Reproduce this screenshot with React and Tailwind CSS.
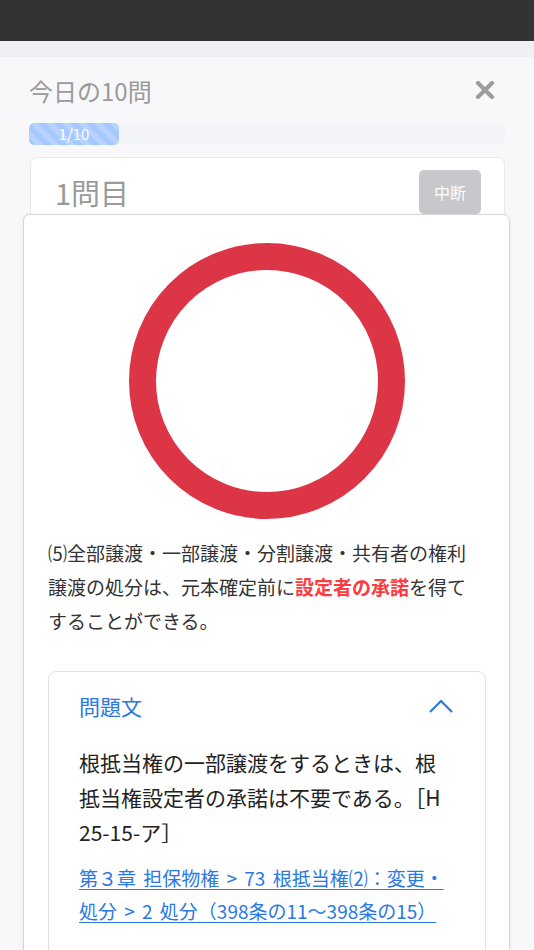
export default function App() {
  const jp = { fontFamily: '"Noto Sans CJK JP", "Noto Sans", sans-serif' };
  return (
    <div className="min-h-[950px] bg-[#f8f8fa] overflow-hidden" style={jp}>
      {/* status bar */}
      <div className="h-[41px] bg-[#333333]" />
      <div className="h-[16px] bg-[#efeff4]" />

      {/* title row */}
      <div className="flex items-center justify-between ml-[29px] mr-[39px] pt-[18px]">
        <h1 className="text-[24px] leading-[32px] text-[#9a9a9a]">今日の10問</h1>
        <svg width="20" height="18" viewBox="0 0 20 18" className="mt-[-2px]">
          <path d="M3 2 L17 16 M17 2 L3 16" stroke="#9d9d9d" strokeWidth="4.2" strokeLinecap="round" />
        </svg>
      </div>

      {/* progress */}
      <div className="mx-[29px] mt-[16px] h-[22px] rounded-[5px] bg-[#f3f4f7] overflow-hidden">
        <div className="h-full w-[90px] rounded-[5px] bg-[#a6c8fd] bg-[linear-gradient(45deg,rgba(255,255,255,.18)_25%,transparent_25%,transparent_50%,rgba(255,255,255,.18)_50%,rgba(255,255,255,.18)_75%,transparent_75%,transparent)] bg-[length:16px_16px] flex items-center justify-center text-[15px] text-white">
          1/10
        </div>
      </div>

      {/* question card header */}
      <div className="ml-[30px] mr-[29px] mt-[12px] h-[57px] bg-white rounded-t-[7px] border border-b-0 border-[#e9e9ec] flex items-start justify-between pl-[24px] pr-[23px]">
        <span className="text-[29px] leading-[40px] mt-[14px] text-[#9a9a9a]">1問目</span>
        <button className="mt-[12px] w-[62px] h-[44px] rounded-[5px] bg-[#c6c8cb] text-white text-[16px]">中断</button>
      </div>

      {/* answer overlay */}
      <div className="ml-[23px] mr-[24px] bg-white rounded-t-[7px] border border-[#d6d6d9] shadow-[0_0_4px_rgba(0,0,0,0.06)] pt-[28px] pb-[40px]">
        <div className="flex justify-center">
          <svg width="276" height="276" viewBox="0 0 276 276">
            <circle cx="138" cy="138" r="124.5" fill="none" stroke="#dc3545" strokeWidth="27" />
          </svg>
        </div>

        <p className="mt-[17px] pl-[24px] text-[19px] leading-[34px] text-[#333333]">
          ⑸全部譲渡・一部譲渡・分割譲渡・共有者の権利<br />
          譲渡の処分は、元本確定前に<span className="text-[#ff3b3f] font-bold">設定者の承諾</span>を得て<br />
          することができる。
        </p>

        <div className="mt-[33px] ml-[24px] mr-[23px] rounded-[8px] border border-[#dfe1e6] px-[30px] pt-[20px] pb-[30px]">
          <div className="flex items-center justify-between">
            <span className="text-[21px] leading-[28px] text-[#2a78e4]">問題文</span>
            <svg width="26" height="16" viewBox="0 0 26 16" className="mr-[1px]">
              <path d="M2 14 L13 3 L24 14" fill="none" stroke="#2a78e4" strokeWidth="2.2" />
            </svg>
          </div>
          <p className="mt-[25px] text-[21px] leading-[35px] text-[#222222]">
            根抵当権の一部譲渡をするときは、根<br />
            抵当権設定者の承諾は不要である。［H<br />
            25-15-ア］
          </p>
          <p className="mt-[11px] text-[19px] leading-[33px] text-[#2a78e4] underline underline-offset-[3px] [word-spacing:3px]">
            第３章 担保物権 &gt; 73 根抵当権⑵：変更・<br />
            処分 &gt; 2 処分（398条の11〜398条の15）
          </p>
        </div>
      </div>
    </div>
  );
}
